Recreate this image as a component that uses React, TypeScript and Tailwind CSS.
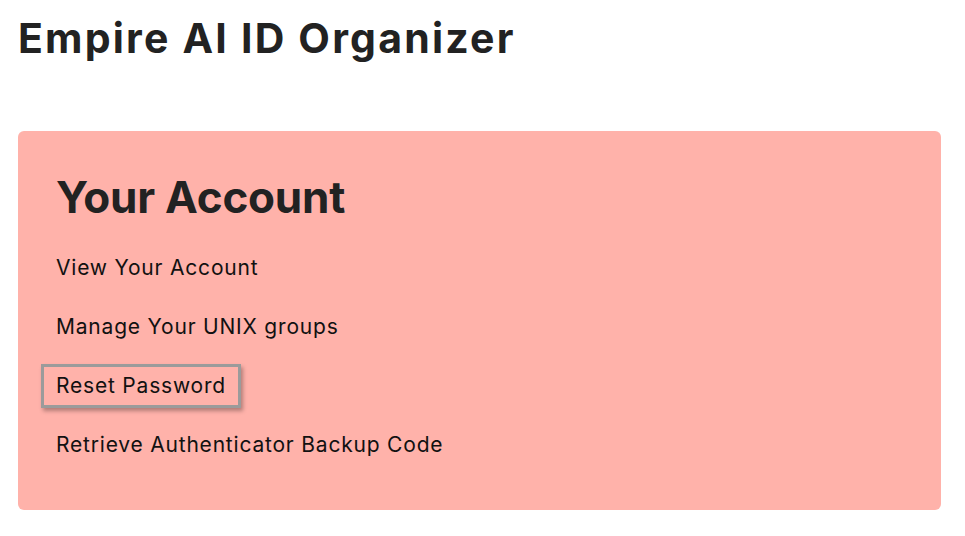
import React from 'react';

const links = [
  'View Your Account',
  'Manage Your UNIX groups',
  'Reset Password',
  'Retrieve Authenticator Backup Code',
];

const App: React.FC = () => {
  return (
    <div className="min-h-[536px] bg-white pl-[18px] pr-[24px] pt-[10px] font-['Inter','Noto_Sans',sans-serif]">
      <h1 className="text-[41px] font-bold leading-[56px] tracking-[2.2px] text-[#222222]">
        Empire AI ID Organizer
      </h1>

      <div className="mt-[65px] rounded-[6px] bg-[#ffb2aa] px-[23px] pt-[38px] pb-[43px]">
        <h2 className="pl-[15px] text-[44px] font-bold leading-[56px] tracking-[-0.2px] text-[#222222]">
          Your Account
        </h2>
        <ul className="mt-[21px] flex flex-col gap-[15px]">
          {links.map((label) => (
            <li key={label}>
              <a
                href="#"
                className={
                  label === 'Reset Password'
                    ? 'inline-block border-[3px] border-[#9b9b9b] px-[12px] py-[7px] text-[21px] leading-[24px] tracking-[0.8px] text-[#111111] shadow-[2px_3px_4px_rgba(0,0,0,0.3)]'
                    : 'inline-block border-[3px] border-transparent px-[12px] py-[7px] text-[21px] leading-[24px] tracking-[0.8px] text-[#111111]'
                }
              >
                {label}
              </a>
            </li>
          ))}
        </ul>
      </div>
    </div>
  );
};

export default App;
